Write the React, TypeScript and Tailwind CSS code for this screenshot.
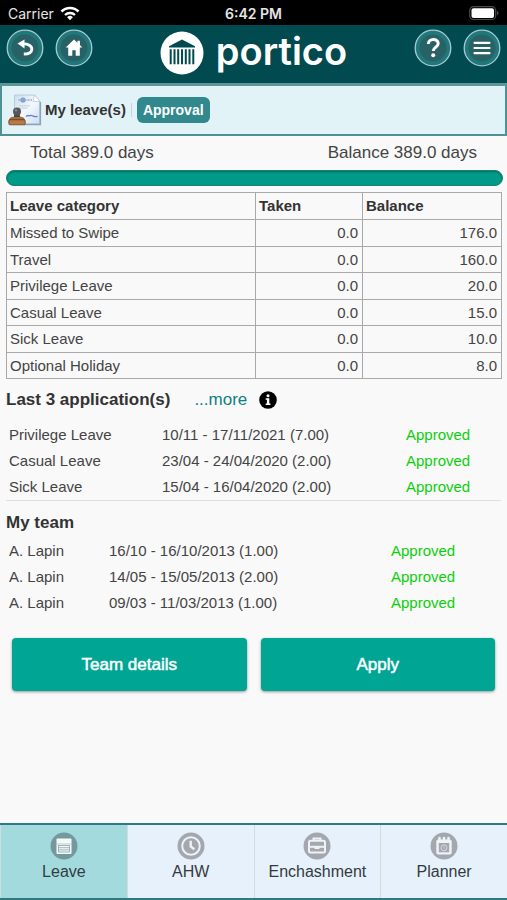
import React from 'react';
import clsx from 'clsx';

const BALANCES = [
    { category: 'Missed to Swipe', taken: '0.0', balance: '176.0' },
    { category: 'Travel', taken: '0.0', balance: '160.0' },
    { category: 'Privilege Leave', taken: '0.0', balance: '20.0' },
    { category: 'Casual Leave', taken: '0.0', balance: '15.0' },
    { category: 'Sick Leave', taken: '0.0', balance: '10.0' },
    { category: 'Optional Holiday', taken: '0.0', balance: '8.0' },
];

const APPLICATIONS = [
    { name: 'Privilege Leave', dates: '10/11 - 17/11/2021 (7.00)', status: 'Approved' },
    { name: 'Casual Leave', dates: '23/04 - 24/04/2020 (2.00)', status: 'Approved' },
    { name: 'Sick Leave', dates: '15/04 - 16/04/2020 (2.00)', status: 'Approved' },
];

const TEAM = [
    { name: 'A. Lapin', dates: '16/10 - 16/10/2013 (1.00)', status: 'Approved' },
    { name: 'A. Lapin', dates: '14/05 - 15/05/2013 (2.00)', status: 'Approved' },
    { name: 'A. Lapin', dates: '09/03 - 11/03/2013 (1.00)', status: 'Approved' },
];

const TABS = [
    { label: 'Leave', icon: LeaveIcon, active: true },
    { label: 'AHW', icon: ClockIcon, active: false },
    { label: 'Enchashment', icon: CaseIcon, active: false },
    { label: 'Planner', icon: PlannerIcon, active: false },
];

function LeaveIcon() {
    return (
        <svg viewBox="0 0 28 28" className="w-7 h-7" aria-hidden="true">
            <circle cx="14" cy="14" r="13.5" fill="#74999c" />
            <rect x="6.5" y="6.5" width="15" height="15.5" rx="1" fill="#f4fafa" />
            <path d="M6.5 12h15" stroke="#a9c3c5" strokeWidth="0.8" />
            <rect x="8.5" y="13.5" width="11" height="6.5" fill="none" stroke="#86a5a8" strokeWidth="0.8" />
            <path d="M8.5 15.7h11M8.5 17.9h11" stroke="#86a5a8" strokeWidth="0.8" />
        </svg>
    );
}

function ClockIcon() {
    return (
        <svg viewBox="0 0 28 28" className="w-7 h-7" aria-hidden="true">
            <circle cx="14" cy="14" r="13.5" fill="#a4a8ae" />
            <circle cx="14" cy="14" r="8.8" fill="none" stroke="#eef3f8" strokeWidth="2" />
            <path d="M13.7 8.8v5.6l3.6 2.8" fill="none" stroke="#eef3f8" strokeWidth="2.4" />
        </svg>
    );
}

function CaseIcon() {
    return (
        <svg viewBox="0 0 28 28" className="w-7 h-7" aria-hidden="true">
            <circle cx="14" cy="14" r="13.5" fill="#a4a8ae" />
            <path d="M10.5 9V6.5h7V9" fill="none" stroke="#eef3f8" strokeWidth="2" />
            <rect x="6" y="8.8" width="16" height="11.8" rx="1.5" fill="none" stroke="#eef3f8" strokeWidth="2" />
            <path d="M6 14.8h16" stroke="#eef3f8" strokeWidth="2" />
            <path d="M11.5 14.5h5v2.5h-5z" fill="#eef3f8" />
        </svg>
    );
}

function PlannerIcon() {
    return (
        <svg viewBox="0 0 28 28" className="w-7 h-7" aria-hidden="true">
            <circle cx="14" cy="14" r="13.5" fill="#a4a8ae" />
            <path d="M9.5 6v4M14 6v4M18.500 6v4" stroke="#eef3f8" strokeWidth="2.600" strokeLinecap="round" />
            <rect x="6.3" y="7.5" width="15.4" height="15" rx="2" fill="#eef3f8" />
            <rect x="8.8" y="11" width="10.4" height="9.3" fill="#a4a8ae" />
            <circle cx="14" cy="15.8" r="3" fill="none" stroke="#d5dae0" strokeWidth="1" />
            <path d="M14 14.3v1.5l1.2.8" fill="none" stroke="#d5dae0" strokeWidth="0.8" />
        </svg>
    );
}

function StampIcon() {
    return (
        <svg viewBox="0 0 36 34" className="w-9 h-8.5" aria-hidden="true">
            <defs>
                <linearGradient id="paper" x1="0" y1="0" x2="1" y2="1">
                    <stop offset="0" stopColor="#c9dcec" />
                    <stop offset="0.5" stopColor="#f3f8fd" />
                    <stop offset="1" stopColor="#cbdcf0" />
                </linearGradient>
                <linearGradient id="stamp" x1="0" y1="0" x2="0" y2="1">
                    <stop offset="0" stopColor="#b98a5c" />
                    <stop offset="1" stopColor="#8a5127" />
                </linearGradient>
            </defs>
            <path d="M6.5 2h20l5.500 6.500v22.500H6.500z" fill="url(#paper)" stroke="#b3c3d3" strokeWidth="0.8" />
            <path d="M26.500 2l-1.500 6.500h7z" fill="#fff" stroke="#a9bccd" strokeWidth="0.600" />
            <path d="M32.300 9v22.500H16" fill="none" stroke="#8fa2b8" strokeWidth="1.600" />
            <circle cx="15" cy="7" r="2.600" fill="#7e9fc9" />
            <path d="M10.500 7h13.500" stroke="#8fb0d6" strokeWidth="1.500" strokeDasharray="2 1" />
            <path d="M11 12.800h11M11 15h9" stroke="#c5cfe0" strokeWidth="1" />
            <path d="M18 23.500c2-2 3 0 4.500-1s2 2 7 .8" fill="none" stroke="#6575d6" strokeWidth="1.300" />
            <path d="M6.500 20h5l.8 5.500h-6.600z" fill="#4a4541" />
            <circle cx="9" cy="18.500" r="4" fill="#55575a" />
            <circle cx="8" cy="17.300" r="1.200" fill="#85888b" />
            <path d="M1.500 27c0-2 2-2.700 5-3h5c3 .3 5 1 5 3z" fill="url(#stamp)" stroke="#6b4022" strokeWidth="0.600" />
            <rect x="0.800" y="26.800" width="16.400" height="5" rx="1.200" fill="#b77a45" stroke="#6b4022" strokeWidth="0.800" />
        </svg>
    );
}

function RoundButton({ label, children }: { label: string; children: React.ReactNode }) {
    return (
        <button type="button" aria-label={label} className="cursor-pointer">
            <svg viewBox="0 0 38 38" className="w-[38px] h-[38px]">
                <circle cx="19" cy="19" r="17.800" fill="#21787b" stroke="#a5cbd0" strokeWidth="1.300" />
                <circle cx="19" cy="19" r="13.500" fill="#286266" />
                {children}
            </svg>
        </button>
    );
}

function StatusBar() {
    return (
        <div className="grid grid-cols-3 items-center h-[25px] pt-0.5 px-2 bg-black font-['Inter',sans-serif] text-[#e6e6e6] text-sm">
            <div className="flex items-center gap-1.5">
                <span>Carrier</span>
                <svg viewBox="0 0 20 15" className="w-5 h-[15px]" aria-hidden="true">
                    <path d="M1.500 5.500a12 12 0 0 1 17 0" fill="none" stroke="#fff" strokeWidth="2.600" />
                    <path d="M5 9a7.200 7.200 0 0 1 10 0" fill="none" stroke="#fff" strokeWidth="2.400" />
                    <path d="M10 14.200l-2.900-3a4.200 4.200 0 0 1 5.800 0z" fill="#fff" />
                </svg>
            </div>
            <span className="text-center font-semibold">6:42 PM</span>
            <svg viewBox="0 0 30 15" className="w-[30px] h-[15px] justify-self-end" aria-hidden="true">
                <rect x="0.700" y="0.700" width="26" height="12.800" rx="3.800" fill="none" stroke="#4b4b4b" strokeWidth="1.200" />
                <rect x="2.500" y="2.300" width="22.500" height="9.600" rx="2" fill="#fff" />
                <path d="M28 5c2 .6 2 3.600 0 4.200z" fill="#4b4b4b" />
            </svg>
        </div>
    );
}

function Header() {
    return (
        <header className="flex items-start justify-between h-[61px] px-1.5 pt-1 bg-[#014a50] border-b-3 border-[#5b9699]">
            <div className="flex gap-[11px]">
                <RoundButton label="Back">
                    <path d="M18.500 10.500v9l-7-5z" fill="#fff" />
                    <path d="M16 15c6-.5 10 2 9.800 5.300-.2 3.400-4 4.700-8 4.700" fill="none" stroke="#fff" strokeWidth="2.800" />
                </RoundButton>
                <RoundButton label="Home">
                    <path
                        d="M19 10.500l-8.300 8h2.500v8.300h4.100v-5.600h3.400v5.600h4.100v-8.300h2.500l-2.400-2.400v-4.300h-2.500v1.900z"
                        fill="#fff"
                    />
                </RoundButton>
            </div>
            <div className="flex items-start gap-3 pt-0.5">
                <svg viewBox="0 0 44 44" className="w-11 h-11" aria-hidden="true">
                    <circle cx="22" cy="22" r="21.500" fill="#fff" />
                    <path d="M22 8.500l13 6.800v1.200H9v-1.200z" fill="#014a50" />
                    <path
                        d="M10.700 18.300v15M14.500 18.300v15M18.200 18.300v15M22 18.300v15M25.800 18.300v15M29.500 18.300v15M33.300 18.300v15"
                        stroke="#014a50"
                        strokeWidth="2"
                    />
                </svg>
                <span className="font-['Inter',sans-serif] font-semibold text-[38px] leading-10 text-white">portico</span>
            </div>
            <div className="flex gap-[11px]">
                <RoundButton label="Help">
                    <path
                        d="M14.300 15c0-5.800 9.900-5.800 9.900-.4 0 3.700-5 3.700-5 7.500"
                        fill="none"
                        stroke="#fff"
                        strokeWidth="3"
                    />
                    <circle cx="19.200" cy="26.200" r="2" fill="#fff" />
                </RoundButton>
                <RoundButton label="Menu">
                    <path d="M11.500 13.800h15M11.500 19h15M11.500 24.200h15" stroke="#fff" strokeWidth="2.200" strokeLinecap="round" />
                </RoundButton>
            </div>
        </header>
    );
}

type LeaveRow = { name: string; dates: string; status: string };

function LeaveList({ rows, nameWidth, statusWidth }: { rows: LeaveRow[]; nameWidth: string; statusWidth: string }) {
    return (
        <table className="w-full table-fixed text-[15px] leading-[18px]">
            <colgroup>
                <col className={nameWidth} />
                <col />
                <col className={statusWidth} />
            </colgroup>
            <tbody>
                {rows.map((row) => (
                    <tr key={row.dates}>
                        <td className="py-1 pl-[3px]">{row.name}</td>
                        <td className="py-1">{row.dates}</td>
                        <td className="py-1 text-[#0ccf0c]">{row.status}</td>
                    </tr>
                ))}
            </tbody>
        </table>
    );
}

export default function App() {
    return (
        <div className="flex flex-col min-h-screen bg-[#f9f9f9] font-['Liberation_Sans',Arial,sans-serif] text-[#444]">
            <StatusBar />
            <Header />

            <div className="flex items-center h-[50px] pl-1.5 bg-[#e2f3f8] border-x-2 border-b-2 border-[#4d9194]">
                <StampIcon />
                <h1 className="pl-px text-[15px] font-bold text-[#333]">My leave(s)</h1>
                <span className="mx-[5px] h-3.5 w-px bg-[#c9d3d6]" />
                <button type="button" className="h-[26px] px-1.5 rounded-md bg-[#32898d] text-sm font-bold text-white">
                    Approval
                </button>
            </div>

            <main className="flex-1">
                <div className="flex justify-between px-[30px] pt-[7px] text-[17px] leading-5">
                    <span>Total 389.0 days</span>
                    <span>Balance 389.0 days</span>
                </div>
                <div className="mt-[7px] mx-1 ml-1.5 h-4 rounded-full bg-[#019a88] border border-[#158273] shadow-[inset_0_1px_2px_rgba(0,0,0,0.3)]" />

                <table className="mt-1.5 ml-1.5 w-[calc(100%-11px)] table-fixed border-collapse border border-[#b9b9b9] text-[15px] leading-[18px]">
                    <colgroup>
                        <col />
                        <col className="w-[107px]" />
                        <col className="w-[139px]" />
                    </colgroup>
                    <thead>
                        <tr className="h-[27px] text-left text-[#333]">
                            <th className="px-[3px] border border-[#a9a9a9]">Leave category</th>
                            <th className="px-[3px] border border-[#a9a9a9]">Taken</th>
                            <th className="px-[3px] border border-[#a9a9a9]">Balance</th>
                        </tr>
                    </thead>
                    <tbody>
                        {BALANCES.map((row) => (
                            <tr key={row.category} className="h-[26px] odd:h-[27px]">
                                <td className="px-[3px] border border-[#a9a9a9]">{row.category}</td>
                                <td className="px-1 border border-[#a9a9a9] text-right">{row.taken}</td>
                                <td className="px-1 border border-[#a9a9a9] text-right">{row.balance}</td>
                            </tr>
                        ))}
                    </tbody>
                </table>

                <section className="mx-1.5 border-b border-[#dedede]">
                    <div className="flex items-center pt-[11px] pb-3 text-[17px] leading-5">
                        <h2 className="font-bold text-[#333]">Last 3 application(s)</h2>
                        <a href="#more" className="ml-6 text-[#0f7f84]">
                            ...more
                        </a>
                        <button type="button" aria-label="Leave information" className="ml-3">
                            <svg viewBox="0 0 18 18" className="w-[18px] h-[18px]">
                                <circle cx="9" cy="9" r="8.800" fill="#000" />
                                <circle cx="9" cy="4.700" r="1.500" fill="#fff" />
                                <path d="M6.700 7.300h3.600v5.200h1.200v1.500H6.700v-1.500h1.200V8.800H6.700z" fill="#fff" />
                            </svg>
                        </button>
                    </div>
                    <LeaveList rows={APPLICATIONS} nameWidth="w-[156px]" statusWidth="w-[95px]" />
                </section>

                <section className="mx-1.5">
                    <h2 className="pt-3 pb-[5px] text-[17px] leading-5 font-bold text-[#333]">My team</h2>
                    <LeaveList rows={TEAM} nameWidth="w-[103px]" statusWidth="w-[110px]" />
                </section>

                <div className="grid grid-cols-2 gap-3.5 px-3 pt-[22px] text-[17px] text-white">
                    <button type="button" className="h-[53px] rounded bg-[#01a594] font-medium shadow-[0_1px_3px_rgba(0,0,0,0.4)] [-webkit-text-stroke:0.5px_white]">
                        Team details
                    </button>
                    <button type="button" className="h-[53px] rounded bg-[#01a594] font-medium shadow-[0_1px_3px_rgba(0,0,0,0.4)] [-webkit-text-stroke:0.5px_white]">
                        Apply
                    </button>
                </div>
            </main>

            <nav className="grid grid-cols-4 h-[77px] border-y-2 border-[#2c7b80] bg-[#e7f1fb]">
                {TABS.map((tab) => {
                    const Icon = tab.icon;
                    return (
                        <a
                            key={tab.label}
                            href={`#${tab.label.toLowerCase()}`}
                            className={clsx(
                                'flex flex-col items-center pt-[7px] gap-0.5 text-base leading-5 text-[#333b42] border-l border-[#cfdedd]',
                                tab.active && 'bg-[#a3dadd]',
                            )}
                        >
                            <Icon />
                            <span>{tab.label}</span>
                        </a>
                    );
                })}
            </nav>
        </div>
    );
}
